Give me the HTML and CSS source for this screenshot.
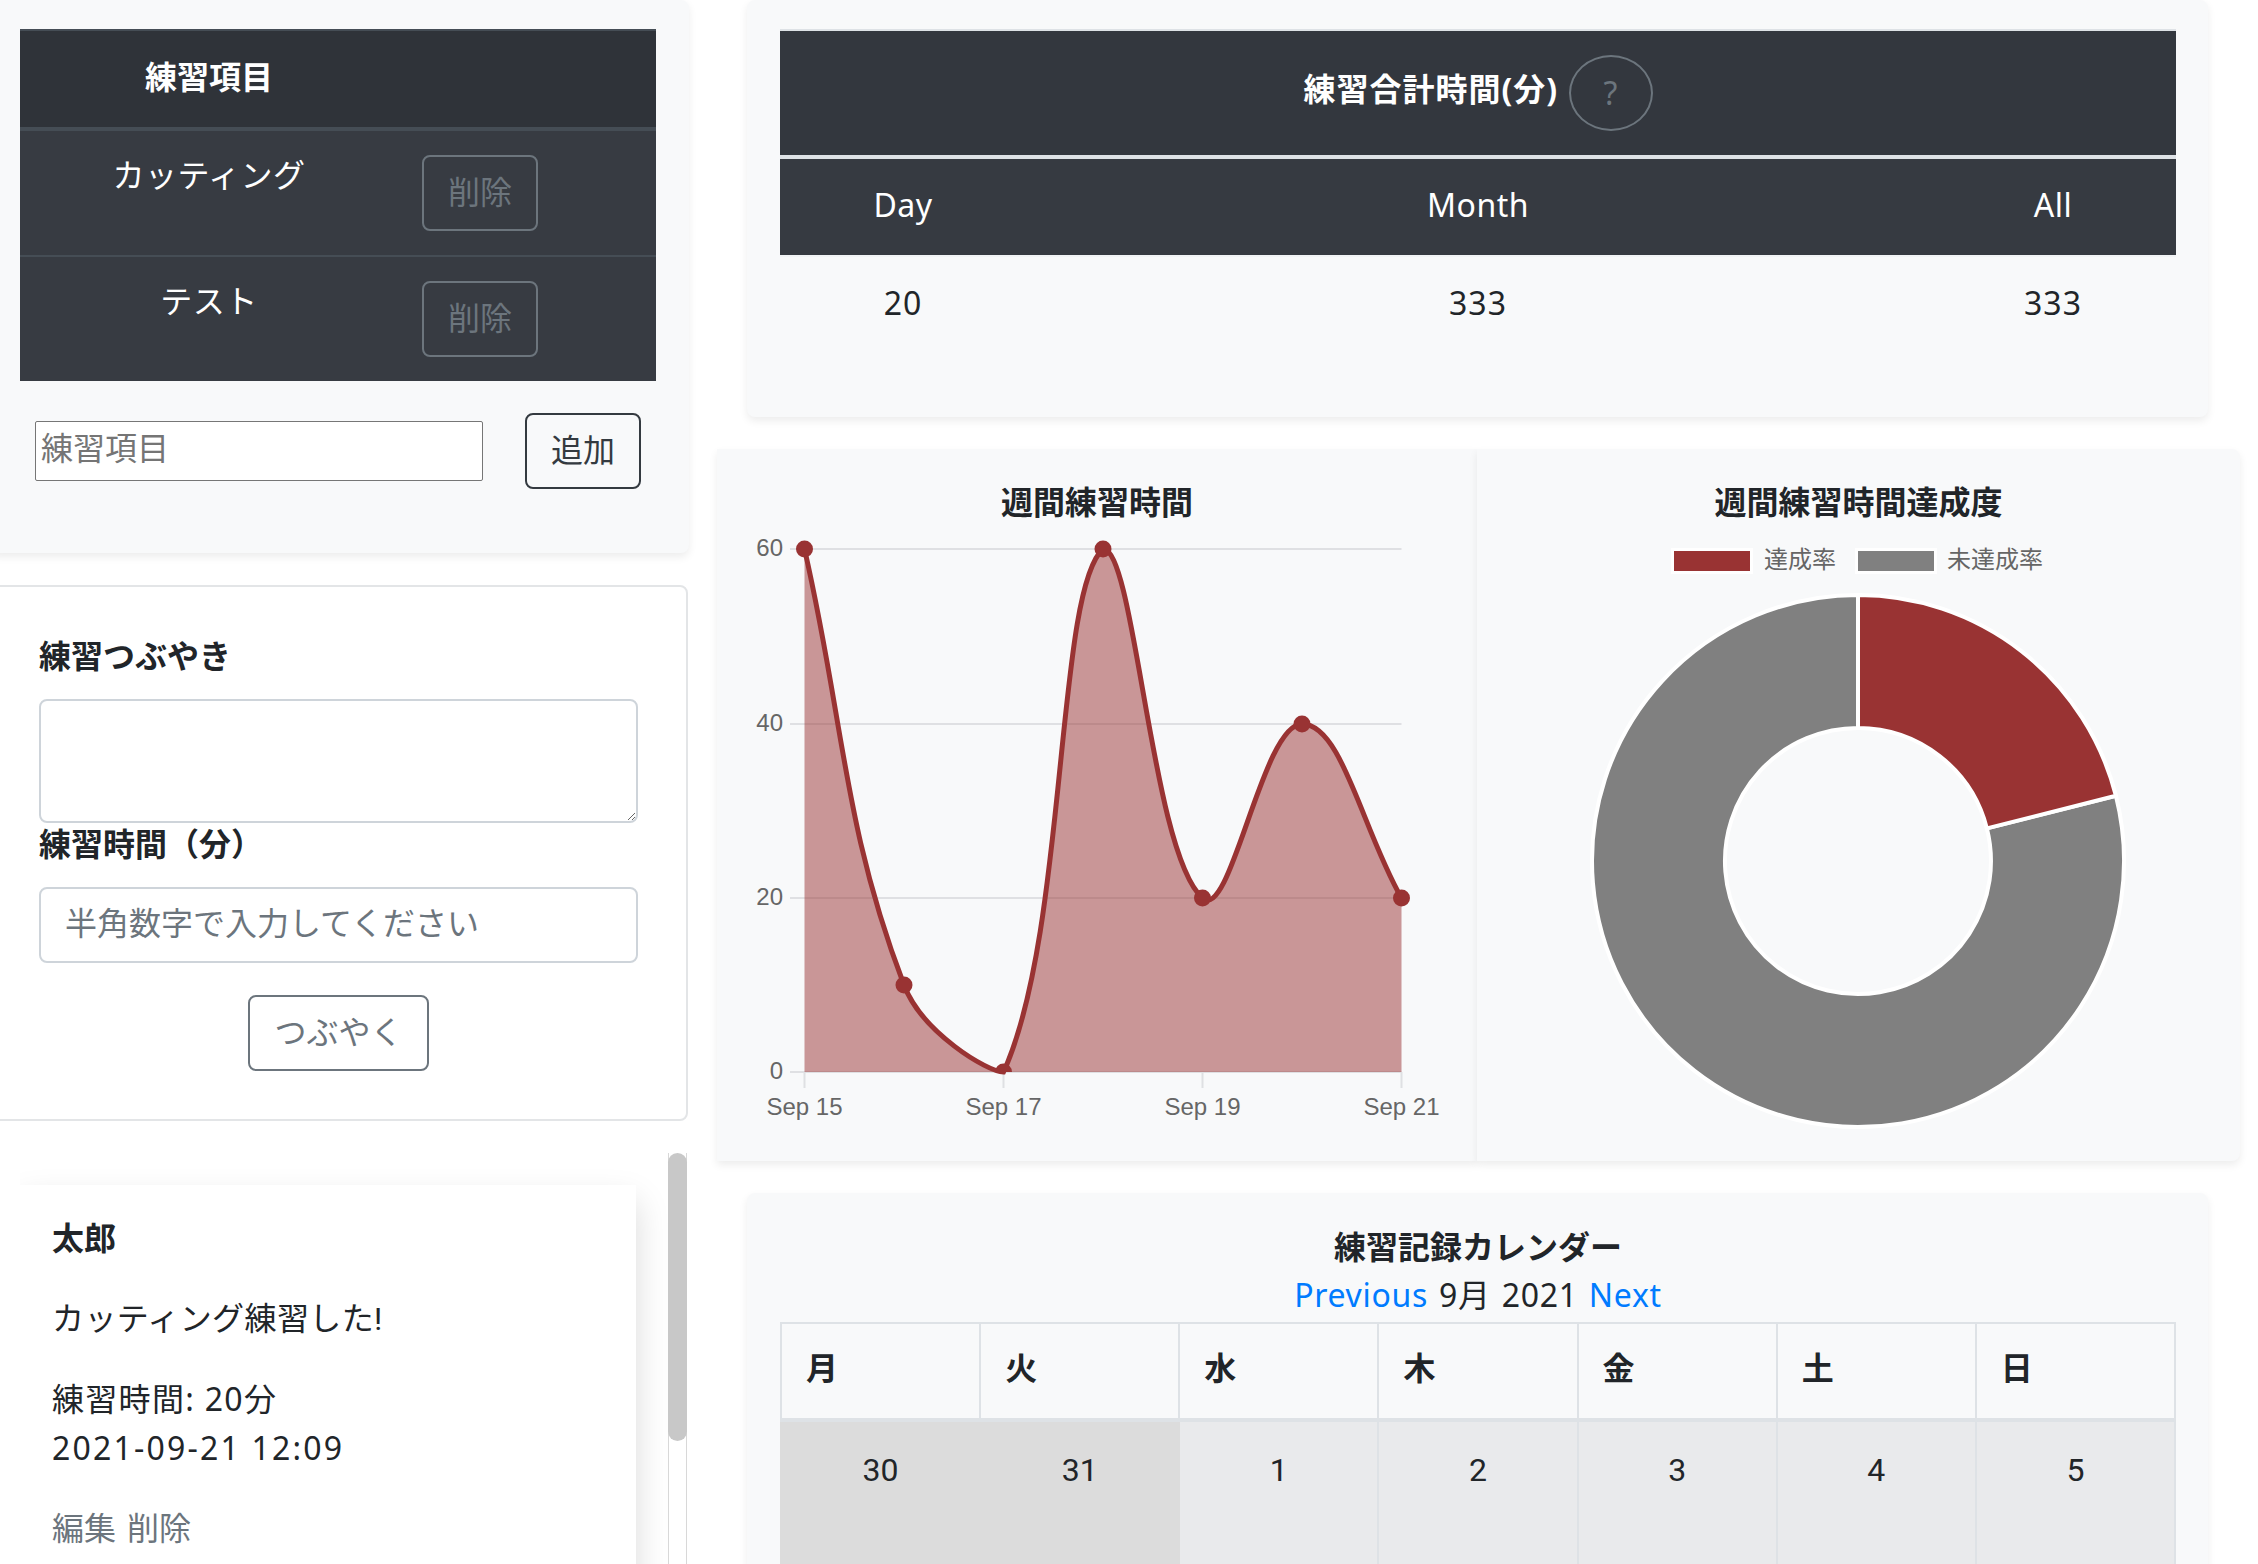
FILE: index.html
```html
<!DOCTYPE html>
<html lang="ja">
<head>
    <meta charset="UTF-8">
    <title>練習記録</title>
    <link rel="stylesheet" href="styles.css">
</head>
<body>
    <div class="wrapper">
        <div class="left">
            <div class="panel items">
                <table class="items-table">
                    <thead>
                        <tr><th class="item-name">練習項目</th><th></th></tr>
                    </thead>
                    <tbody>
                        <tr>
                            <td class="item-name">カッティング</td>
                            <td><button class="btn btn-muted">削除</button></td>
                        </tr>
                        <tr>
                            <td class="item-name">テスト</td>
                            <td><button class="btn btn-muted">削除</button></td>
                        </tr>
                    </tbody>
                </table>
                <form class="add-form">
                    <input class="add-input" type="text" placeholder="練習項目">
                    <button type="button" class="btn btn-dark">追加</button>
                </form>
            </div>

            <form class="tweet-form">
                <label class="field-label">練習つぶやき</label>
                <textarea class="field field-area" rows="2"></textarea>
                <label class="field-label">練習時間（分）</label>
                <input class="field field-input" type="text" placeholder="半角数字で入力してください">
                <div class="form-submit"><button type="button" class="btn btn-gray">つぶやく</button></div>
            </form>

            <div class="post-list">
                <div class="posts">
                    <div class="post">
                        <p class="post-name">太郎</p>
                        <p class="post-body">カッティング練習した!</p>
                        <p><span class="post-hours">練習時間: 20分</span><br><span class="post-date">2021-09-21 12:09</span></p>
                        <p class="post-links">編集 削除</p>
                    </div>
                </div>
                <div class="scroll-track"><div class="scroll-thumb"></div></div>
            </div>
        </div>

        <div class="right">
            <div class="panel totals">
                <table class="totals-table">
                    <colgroup>
                        <col class="side-col"><col><col class="side-col">
                    </colgroup>
                    <thead>
                        <tr>
                            <th colspan="3" class="totals-title">練習合計時間(分) <button class="btn btn-help">?</button></th>
                        </tr>
                        <tr class="totals-head">
                            <td>Day</td><td>Month</td><td>All</td>
                        </tr>
                    </thead>
                    <tbody>
                        <tr class="totals-row">
                            <td>20</td><td>333</td><td>333</td>
                        </tr>
                    </tbody>
                </table>
            </div>

            <div class="charts">
                <div class="chart-card line-card">
                    <h2 class="chart-title">週間練習時間</h2>
                    <svg class="chart" viewBox="717 520 760 640">
                        <g class="grid">
                            <line x1="790" y1="549" x2="1401.5" y2="549"/>
                            <line x1="790" y1="724" x2="1401.5" y2="724"/>
                            <line x1="790" y1="898" x2="1401.5" y2="898"/>
                            <line x1="790" y1="1072" x2="1401.5" y2="1072"/>
                            <line x1="804.5" y1="1072" x2="804.5" y2="1088"/>
                            <line x1="1003.5" y1="1072" x2="1003.5" y2="1088"/>
                            <line x1="1202.5" y1="1072" x2="1202.5" y2="1088"/>
                            <line x1="1401.5" y1="1072" x2="1401.5" y2="1088"/>
                        </g>
                        <path class="area" d="M804.5,549 C844.3,723.4 842.6,823.5 904,985 C922.2,1032.7 987.7,1072 1003.5,1072 C1067.3,932.3 1055.7,590.4 1103,549 C1135.3,549 1151.2,852.9 1202.5,898 C1230.8,922.9 1262.2,724 1302,724 C1341.8,724 1361.7,828.4 1401.5,898 L1401.5,1072 L804.5,1072 Z"/>
                        <path class="curve" d="M804.5,549 C844.3,723.4 842.6,823.5 904,985 C922.2,1032.7 987.7,1072 1003.5,1072 C1067.3,932.3 1055.7,590.4 1103,549 C1135.3,549 1151.2,852.9 1202.5,898 C1230.8,922.9 1262.2,724 1302,724 C1341.8,724 1361.7,828.4 1401.5,898"/>
                        <g class="points">
                            <circle cx="804.5" cy="549" r="8.5"/>
                            <circle cx="904" cy="985" r="8.5"/>
                            <path d="M995,1072 a8.5,8.5 0 0 1 17,0 Z"/>
                            <circle cx="1103" cy="549" r="8.5"/>
                            <circle cx="1202.5" cy="898" r="8.5"/>
                            <circle cx="1302" cy="724" r="8.5"/>
                            <circle cx="1401.5" cy="898" r="8.5"/>
                        </g>
                        <g class="axis-y">
                            <text x="783" y="556">60</text>
                            <text x="783" y="731">40</text>
                            <text x="783" y="905">20</text>
                            <text x="783" y="1079">0</text>
                        </g>
                        <g class="axis-x">
                            <text x="804.5" y="1115">Sep 15</text>
                            <text x="1003.5" y="1115">Sep 17</text>
                            <text x="1202.5" y="1115">Sep 19</text>
                            <text x="1401.5" y="1115">Sep 21</text>
                        </g>
                    </svg>
                </div>

                <div class="chart-card donut-card">
                    <h2 class="chart-title">週間練習時間達成度</h2>
                    <svg class="chart" viewBox="1477 520 763 640">
                        <rect class="swatch-red" x="1672.5" y="549.5" width="79" height="23"/>
                        <text class="legend" x="1764" y="568">達成率</text>
                        <rect class="swatch-gray" x="1856.5" y="549.5" width="79" height="23"/>
                        <text class="legend" x="1947" y="568">未達成率</text>
                        <path class="slice-gray" d="M1858,595 A266,266 0 1 0 2115.9,795.8 L1986.9,828.4 A133,133 0 1 1 1858,728 Z"/>
                        <path class="slice-red" d="M1858,595 A266,266 0 0 1 2115.9,795.8 L1986.9,828.4 A133,133 0 0 0 1858,728 Z"/>
                    </svg>
                </div>
            </div>

            <div class="panel calendar">
                <h2 class="chart-title">練習記録カレンダー</h2>
                <div class="month-nav"><a href="#">Previous</a> 9月 2021 <a href="#">Next</a></div>
                <table class="month-table">
                    <thead>
                        <tr><th>月</th><th>火</th><th>水</th><th>木</th><th>金</th><th>土</th><th>日</th></tr>
                    </thead>
                    <tbody>
                        <tr>
                            <td class="other-month">30</td>
                            <td class="other-month">31</td>
                            <td>1</td><td>2</td><td>3</td><td>4</td><td>5</td>
                        </tr>
                    </tbody>
                </table>
            </div>
        </div>
    </div>
</body>
</html>
```

FILE: styles.css
```css
* {
    box-sizing: border-box;
}

html, body {
    height: 100%;
}

body {
    margin: 0;
    overflow: hidden;
    background: #fff;
    color: #212529;
    font-family: Roboto, "Noto Sans CJK JP", sans-serif;
    font-size: 32px;
    line-height: 48px;
}

.wrapper {
    display: flex;
    margin-left: -11px;
}

.left {
    width: 700px;
    flex: none;
}

.right {
    width: 1523px;
    margin-left: 28px;
    flex: none;
}

.panel {
    background: #f8f9fa;
    border-radius: 8px;
    box-shadow: 0 4px 8px rgba(0, 0, 0, 0.075);
}

/* buttons */
.btn {
    display: inline-block;
    height: 76px;
    padding: 12px 24px;
    background: transparent;
    border: 2px solid;
    border-radius: 8px;
    font: inherit;
}

.btn-muted, .btn-gray, .btn-help {
    color: #6c757d;
    border-color: #6c757d;
}

.btn-dark {
    color: #343a40;
    border-color: #343a40;
}

.btn-help {
    width: 84px;
    padding: 12px 0;
    margin-left: 1px;
    border-radius: 50%;
    font-weight: 400;
    vertical-align: -4px;
}

/* practice items */
.items {
    height: 553px;
    padding: 29px 33px 0 31px;
}

.items-table {
    width: 636px;
    border-collapse: collapse;
    table-layout: fixed;
    color: #fff;
}

.items-table th {
    height: 99px;
    padding: 21px 24px 24px;
    background: #2f3339;
    border-top: 2px solid #454d55;
    border-bottom: 4px solid #454d55;
    text-align: left;
}

.items-table td {
    height: 125px;
    padding: 24px;
    background: #373b42;
    border-top: 2px solid #454d55;
    vertical-align: top;
}

.items-table td.item-name {
    padding-top: 21px;
    letter-spacing: 0.5px;
}

.items-table .item-name {
    width: 378px;
    text-align: center;
}

.add-form {
    display: flex;
    align-items: center;
    margin: 32px 0 0 15px;
}

.add-input {
    width: 448px;
    height: 60px;
    padding: 0 5px 4px;
    margin-right: 42px;
    border: 1px solid #767676;
    border-radius: 2px;
    background: #fff;
    font: inherit;
}

.add-input::placeholder {
    color: #757575;
}

/* tweet form */
.tweet-form {
    width: 699px;
    margin-top: 32px;
    padding: 48px;
    border: 2px solid #e3e5e7;
    border-radius: 8px;
}

.field-label {
    display: block;
    margin-top: -2px;
    margin-bottom: 18px;
    font-weight: 700;
}

.field {
    display: block;
    width: 100%;
    padding: 12px 24px;
    background: #fff;
    border: 2px solid #ced4da;
    border-radius: 8px;
    color: #495057;
    font: inherit;
}

.field-area {
    height: 124px;
}

.field-input {
    height: 76px;
    padding-bottom: 14px;
}

.field-input::placeholder {
    color: #6c757d;
}

.form-submit {
    margin-top: 32px;
    text-align: center;
}

/* posts */
.post-list {
    display: flex;
    margin-top: 32px;
    padding-left: 31px;
}

.posts {
    width: 648px;
    height: 411px;
    padding-top: 32px;
    overflow: hidden;
}

.post {
    width: 616px;
    height: 500px;
    padding: 30px 32px;
    background: #fff;
    box-shadow: 0 16px 32px rgba(0, 0, 0, 0.15);
}

.post p {
    margin: 0 0 32px;
}

.post .post-name {
    font-weight: 700;
}

.post .post-body {
    letter-spacing: 0.4px;
}

.post .post-links {
    color: #6c757d;
    word-spacing: 3px;
}

.post-hours {
    font-family: "Noto Sans", "Noto Sans CJK JP", sans-serif;
    letter-spacing: 1.3px;
}

.post-date {
    font-family: "Noto Sans", sans-serif;
    letter-spacing: 2.2px;
}

.scroll-track {
    width: 19px;
    height: 411px;
    background: #fff;
    border-left: 1px solid #d8d8d8;
    border-right: 1px solid #d8d8d8;
}

.scroll-thumb {
    width: 19px;
    height: 288px;
    margin-left: -1px;
    background: #c8c8c8;
    border-radius: 10px;
}

/* totals */
.totals {
    height: 417px;
    margin: 0 32px 0 30px;
    padding: 29px 32px 0 33px;
}

.totals-table {
    width: 1396px;
    border-collapse: collapse;
    table-layout: fixed;
    text-align: center;
}

.side-col {
    width: 246px;
}

.totals-title {
    height: 126px;
    padding: 24px;
    background: #33373e;
    border-top: 2px solid #dee2e6;
    border-bottom: 4px solid #dee2e6;
    color: #fff;
    font-family: "Noto Sans", "Noto Sans CJK JP", sans-serif;
    letter-spacing: 1px;
}

.totals-head td {
    height: 99px;
    padding-bottom: 6px;
    background: #363a41;
    color: #fff;
    font-family: "Noto Sans", sans-serif;
    letter-spacing: 0.5px;
}

.totals-row td {
    height: 93px;
    border-top: 2px solid #f1f3f5;
    font-family: "Noto Sans", sans-serif;
    letter-spacing: 1px;
}

/* charts */
.charts {
    display: flex;
    margin-top: 32px;
}

.chart-card {
    height: 712px;
    padding-top: 30px;
    background: #f8f9fa;
    box-shadow: 0 4px 8px rgba(0, 0, 0, 0.075);
}

.line-card {
    width: 760px;
}

.donut-card {
    width: 763px;
    border-radius: 0 8px 8px 0;
}

.chart-title {
    margin: 0;
    font-size: 32px;
    line-height: 48px;
    font-weight: 700;
    text-align: center;
}

.chart {
    display: block;
    width: 100%;
    height: 640px;
    margin-top: -7px;
    font-family: "Liberation Sans", "Noto Sans CJK JP", sans-serif;
    font-size: 24px;
    fill: #666;
}

.grid line {
    stroke: #dfe0e3;
    stroke-width: 2;
}

.area {
    fill: rgba(153, 51, 51, 0.5);
}

.curve {
    fill: none;
    stroke: #993333;
    stroke-width: 5;
}

.points {
    fill: #993333;
}

.axis-y text {
    text-anchor: end;
}

.axis-x text {
    text-anchor: middle;
}

.swatch-red, .swatch-gray {
    stroke: #fff;
    stroke-width: 3;
}

.slice-red, .slice-gray {
    stroke: #fff;
    stroke-width: 4;
}

.swatch-red, .slice-red {
    fill: #993333;
}

.swatch-gray, .slice-gray {
    fill: #808080;
}

/* calendar */
.calendar {
    height: 600px;
    margin: 32px 32px 0 30px;
    padding: 31px 32px 0 33px;
}

.month-nav {
    margin-top: -1px;
    margin-bottom: 3px;
    text-align: center;
    font-family: "Noto Sans", "Noto Sans CJK JP", sans-serif;
    letter-spacing: 0.7px;
    word-spacing: 2px;
}

.month-nav a {
    color: #007bff;
    text-decoration: none;
}

.month-table {
    width: 1396px;
    border-collapse: collapse;
    table-layout: fixed;
}

.month-table th {
    padding: 21px 24px 25px;
    border: 2px solid #dee2e6;
    border-bottom-width: 4px;
    text-align: left;
}

.month-table td {
    height: 240px;
    padding: 24px;
    background: #e9eaec;
    border: 2px solid #dee2e6;
    text-align: center;
    vertical-align: top;
}

.month-table .other-month {
    background: #dcdcdc;
    border-color: #dcdcdc;
}
```
